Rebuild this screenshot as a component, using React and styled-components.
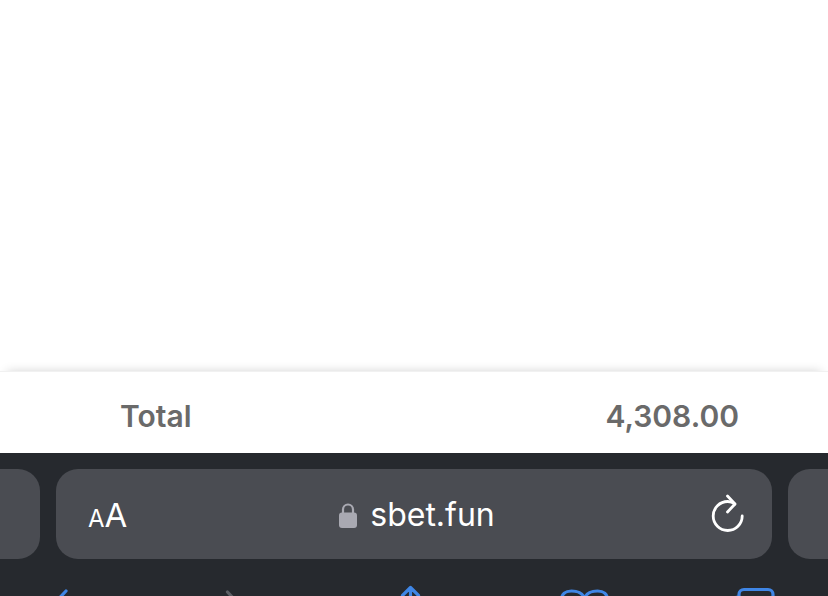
import React from 'react'
import styled, { createGlobalStyle } from 'styled-components'

const GlobalStyle = createGlobalStyle`
  html, body {
    margin: 0;
    padding: 0;
    background: #fff;
  }
  body {
    font-family: Inter, "Liberation Sans", sans-serif;
  }
`

function ReloadIcon() {
  return (
    <ReloadSvg viewBox="0 0 34 40" fill="none" stroke="#fff" strokeWidth="2.800" strokeLinecap="round" strokeLinejoin="round">
      <path d="M32.200 22a14.500 14.500 0 1 1-14.500-14.500c2.500 0 5 .8 7 2.500" />
      <path d="M17.500 2l7.500 8-7.500 8" />
    </ReloadSvg>
  )
}

function LockIcon() {
  return (
    <LockSvg viewBox="0 0 18 26">
      <path d="M4 12V7.500a5 5 0 0 1 10 0V12" fill="none" stroke="#a9a9b2" strokeWidth="2.200" />
      <rect x="0" y="10.500" width="18" height="15.500" rx="3" fill="#a9a9b2" />
    </LockSvg>
  )
}

function App() {
  return (
    <Page>
      <GlobalStyle />
      <Content />
      <Summary>
        <SummaryLabel>Total</SummaryLabel>
        <SummaryValue>4,308.00</SummaryValue>
      </Summary>
      <BrowserBar>
        <TabStrip>
          <SideTab />
          <AddressPill>
            <TextSize>
              <SmallA>A</SmallA>
              <BigA>A</BigA>
            </TextSize>
            <Domain>
              <LockIcon />
              <DomainText>sbet.fun</DomainText>
            </Domain>
            <ReloadIcon />
          </AddressPill>
          <SideTab />
        </TabStrip>
        <Toolbar>
          <ToolIcon viewBox="0 0 60 44" stroke="#3f86e6">
            <path d="M36 6L21 22l15 16" />
          </ToolIcon>
          <ToolIcon viewBox="1.500 0 60 44" stroke="#5c5f65">
            <path d="M25 7l14 15-14 16" />
          </ToolIcon>
          <ToolIcon viewBox="-2.500 0 60 44" stroke="#3f86e6">
            <path d="M30 3v26M22 10.500l8-8 8 8M22 18h-6v24h28V18h-6" />
          </ToolIcon>
          <ToolIcon viewBox="-3.500 0 60 44" stroke="#3f86e6">
            <path d="M30 13C28 8 23 6 17 6 11 6 7 9 7 15v23c8-3 18-2 23 2 5-4 15-5 23-2V15c0-6-4-9-10-9-6 0-11 2-13 7zM30 13v27" />
          </ToolIcon>
          <ToolIcon viewBox="0 0 60 44" stroke="#3f86e6">
            <rect x="14" y="4.500" width="34" height="28" rx="5" />
            <path d="M14 12h-1a5 5 0 0 0-5 5v20a5 5 0 0 0 5 5h24a5 5 0 0 0 5-5v-4" />
          </ToolIcon>
        </Toolbar>
      </BrowserBar>
    </Page>
  )
}

export default App

const Page = styled.div`
  display: flex;
  flex-direction: column;
  height: 596px;
  overflow: hidden;
  background: #fff;
`

const Content = styled.div`
  height: 371px;
  flex-shrink: 0;
`

const Summary = styled.div`
  height: 82px;
  flex-shrink: 0;
  display: flex;
  align-items: center;
  justify-content: space-between;
  padding: 6px 89px 0 120px;
  background: #fff;
  box-shadow: 0 -6px 10px -7px rgba(0, 0, 0, 0.2);
  border-top: 1px solid #f1f1f1;
  box-sizing: border-box;
  font-size: 30px;
  font-weight: 600;
  color: #6a6a6a;
`

const SummaryLabel = styled.span``

const SummaryValue = styled.span``

const BrowserBar = styled.div`
  flex: 1;
  background: #26292e;
  padding-top: 16px;
`

const TabStrip = styled.div`
  display: flex;
  justify-content: center;
  gap: 16px;
  height: 90px;
`

const SideTab = styled.div`
  width: 100px;
  flex-shrink: 0;
  border-radius: 22px;
  background: #4a4c52;
`

const AddressPill = styled.div`
  width: 716px;
  flex-shrink: 0;
  box-sizing: border-box;
  display: grid;
  grid-template-columns: 1fr auto 1fr;
  align-items: center;
  padding: 0 28px 0 32px;
  border-radius: 22px;
  background: #4a4c52;
  color: #fff;
`

const TextSize = styled.div`
  display: flex;
  align-items: baseline;
  padding-top: 2px;
  font-weight: 400;
`

const SmallA = styled.span`
  font-size: 24px;
`

const BigA = styled.span`
  font-size: 33px;
`

const Domain = styled.div`
  display: flex;
  align-items: center;
  gap: 13px;
  margin-left: 2px;
`

const DomainText = styled.span`
  font-size: 32px;
  font-weight: 400;
  line-height: 40px;
  padding-top: 1px;
`

const LockSvg = styled.svg`
  width: 18px;
  height: 26px;
  margin-top: 1px;
`

const ReloadSvg = styled.svg`
  width: 34px;
  height: 40px;
  justify-self: end;
`

const Toolbar = styled.div`
  display: flex;
  justify-content: space-between;
  margin-top: 26px;
  padding: 0 43px 0 30px;
`

const ToolIcon = styled.svg`
  width: 60px;
  height: 44px;
  flex-shrink: 0;
  fill: none;
  stroke-width: 3.200;
  stroke-linecap: round;
  stroke-linejoin: round;
`
